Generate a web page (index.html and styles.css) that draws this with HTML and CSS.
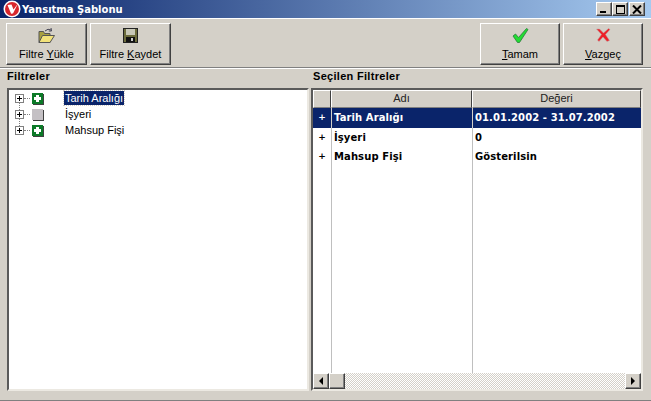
FILE: index.html
```html
<!DOCTYPE html>
<html lang="tr">
<head>
  <meta charset="UTF-8">
  <title>Yansıtma Şablonu</title>
  <link rel="stylesheet" href="styles.css">
</head>
<body>
  <div class="window">
    <div class="titlebar">
      <svg class="app-icon" width="18" height="18" viewBox="0 0 18 18">
        <circle cx="9" cy="9" r="8.5" fill="#fff"/>
        <circle cx="9" cy="9" r="7" fill="#d8262c"/>
        <path d="M4.5 5 L8 13.5 Q10 14.5 11 11.5 L15 3.5 L10.5 9.5 L8.5 4.5 Z" fill="#fff"/>
      </svg>
      <span class="title-text">Yansıtma Şablonu</span>
      <div class="win-btns">
        <button class="win-btn"><span class="min-mark"></span></button>
        <button class="win-btn"><span class="max-mark"></span></button>
        <button class="win-btn win-close">
          <svg width="10" height="9" viewBox="0 0 10 9"><path d="M1 0.5 L9 8.5 M9 0.5 L1 8.5" stroke="#000" stroke-width="2"/></svg>
        </button>
      </div>
    </div>

    <div class="toolbar">
      <button class="tool-btn">
        <svg width="17" height="15" viewBox="0 0 17 15">
          <path d="M1 3.5 L1 14.5 L12 14.5 L12 5.5 L6.5 5.5 L5.5 3.5 Z" fill="#a8a040" stroke="#555" stroke-width="1"/>
          <path d="M1 14.5 L4.5 7.5 L16.5 7.5 L12 14.5 Z" fill="#f2e27a" stroke="#555" stroke-width="1"/>
          <path d="M7 3 Q10 0 13 2 M13 0 L13.5 3 L10.8 3" fill="none" stroke="#445" stroke-width="1"/>
        </svg>
        <span>Filtre <u>Y</u>ükle</span>
      </button>
      <button class="tool-btn">
        <svg width="15" height="15" viewBox="0 0 15 15">
          <rect x="0.5" y="0.5" width="14" height="14" fill="#6b6b3c" stroke="#222"/>
          <rect x="3" y="1" width="9" height="6" fill="#c8c8b8"/>
          <rect x="3" y="9" width="9" height="5" fill="#111"/>
          <rect x="8" y="10" width="2" height="3" fill="#ccc"/>
        </svg>
        <span>Filtre <u>K</u>aydet</span>
      </button>
      <div class="toolbar-gap"></div>
      <button class="tool-btn tool-btn-small">
        <svg width="17" height="15" viewBox="0 0 17 15">
          <path d="M1 8 L3.5 6 L6.5 9.5 L14.5 0.5 L16 1.5 L7.5 14.5 L5.5 14.5 Z" fill="#22dd33" stroke="#2a7a3a" stroke-width="0.8"/>
        </svg>
        <span><u>T</u>amam</span>
      </button>
      <button class="tool-btn tool-btn-small">
        <svg width="15" height="15" viewBox="0 0 15 15">
          <path d="M0.5 1 L3.5 1 L7.5 5 L12.5 0.5 L14 1.5 L9.5 6.5 L13.5 12.5 L11 13.5 L7 9 L3 13.5 L1.5 12 L5.5 6.5 Z" fill="#ee2028" stroke="#b9a0a0" stroke-width="0.5"/>
        </svg>
        <span><u>V</u>azgeç</span>
      </button>
    </div>

    <div class="panels">
      <section class="panel panel-left">
        <h2>Filtreler</h2>
        <div class="sunken tree">
          <div class="tree-row">
            <span class="expander"></span><span class="dots"></span>
            <span class="state state-on"></span>
            <span class="tree-label tree-selected">Tarih Aralığı</span>
          </div>
          <div class="tree-row">
            <span class="expander"></span><span class="dots"></span>
            <span class="state state-off"></span>
            <span class="tree-label">İşyeri</span>
          </div>
          <div class="tree-row">
            <span class="expander"></span><span class="dots"></span>
            <span class="state state-on"></span>
            <span class="tree-label">Mahsup Fişi</span>
          </div>
        </div>
      </section>

      <section class="panel panel-right">
        <h2>Seçilen Filtreler</h2>
        <div class="sunken grid">
          <div class="grid-head">
            <div class="hcell hcell-mark"></div>
            <div class="hcell hcell-name">Adı</div>
            <div class="hcell hcell-value">Değeri</div>
          </div>
          <div class="grid-body">
            <div class="grid-row grid-row-active">
              <div class="cell cell-mark">+</div>
              <div class="cell cell-name">Tarih Aralığı</div>
              <div class="cell cell-value">01.01.2002 - 31.07.2002</div>
            </div>
            <div class="grid-row">
              <div class="cell cell-mark">+</div>
              <div class="cell cell-name">İşyeri</div>
              <div class="cell cell-value">0</div>
            </div>
            <div class="grid-row">
              <div class="cell cell-mark">+</div>
              <div class="cell cell-name">Mahsup Fişi</div>
              <div class="cell cell-value">Gösterilsin</div>
            </div>
            <div class="grid-fill">
              <div class="fill-mark"></div>
              <div class="fill-name"></div>
              <div class="fill-value"></div>
            </div>
          </div>
          <div class="hscroll">
            <button class="scroll-btn"><span class="arrow-left"></span></button>
            <button class="scroll-btn"></button>
            <div class="scroll-track"></div>
            <button class="scroll-btn"><span class="arrow-right"></span></button>
          </div>
        </div>
      </section>
    </div>
    <div class="bottom-strip"></div>
  </div>
</body>
</html>
```

FILE: styles.css
```css
* {
  box-sizing: border-box;
  margin: 0;
  padding: 0;
}
html, body {
  width: 651px;
  height: 401px;
  overflow: hidden;
}
body {
  font-family: 'Liberation Sans', Arial, sans-serif;
  font-size: 11px;
  color: #000;
  background-color: #d4d0c8;
}
.window {
  display: flex;
  flex-direction: column;
  height: 401px;
  border-bottom: 1px solid #808080;
}
button {
  font-family: inherit;
  font-size: inherit;
  color: #000;
  background-color: #d4d0c8;
  border: 1px solid;
  border-color: #fff #404040 #404040 #fff;
  box-shadow: inset -1px -1px 0 #808080;
}

/* title bar */
.titlebar {
  display: flex;
  align-items: center;
  height: 18px;
  flex: none;
  padding-left: 3px;
  background: linear-gradient(90deg, #0a246a, #a6caf0);
}
.app-icon {
  flex: none;
}
.title-text {
  margin-left: 1px;
  font-family: 'DejaVu Sans', Verdana, sans-serif;
  font-size: 10px;
  font-weight: bold;
  color: #fff;
}
.win-btns {
  display: flex;
  margin-left: auto;
  margin-right: 6px;
}
.win-btn {
  display: flex;
  align-items: center;
  justify-content: center;
  width: 16px;
  height: 14px;
}
.win-close {
  margin-left: 1px;
}
.min-mark {
  width: 6px;
  height: 2px;
  margin-top: 6px;
  margin-right: 2px;
  background-color: #000;
}
.max-mark {
  width: 9px;
  height: 9px;
  border: 1px solid #000;
  border-top-width: 2px;
}

/* toolbar */
.toolbar {
  display: flex;
  flex: none;
  height: 50px;
  padding: 4px 8px 3px 6px;
  gap: 3px;
  border-top: 1px solid #fff;
  border-bottom: 1px solid #808080;
  box-shadow: 0 1px 0 #fff;
}
.tool-btn {
  display: flex;
  flex-direction: column;
  align-items: center;
  gap: 5px;
  width: 81px;
  height: 42px;
  padding-top: 4px;
}
.tool-btn-small {
  width: 80px;
}
.toolbar-gap {
  flex: 1;
}

/* panels */
.panels {
  display: flex;
  flex: 1;
  min-height: 0;
  padding: 0 8px 0 7px;
  gap: 2px;
}
.panel {
  display: flex;
  flex-direction: column;
  min-width: 0;
}
.panel-left {
  width: 302px;
}
.panel-right {
  flex: 1;
}
h2 {
  height: 20px;
  padding-top: 2px;
  font-size: 11px;
  font-weight: bold;
  letter-spacing: .3px;
  line-height: 13px;
  white-space: nowrap;
}
.panel-right h2 {
  padding-left: 2px;
}
.sunken {
  flex: 1;
  min-height: 0;
  background-color: #fff;
  border: 2px solid;
  border-color: #5a5a5a #ece9e2 #ece9e2 #5a5a5a;
}
.bottom-strip {
  flex: none;
  height: 9px;
}

/* tree */
.tree {
  padding: 0 0 0 6px;
}
.tree-row {
  display: flex;
  align-items: center;
  height: 16px;
}
.expander {
  position: relative;
  flex: none;
  width: 9px;
  height: 9px;
  border: 1px solid #808080;
  background:
    linear-gradient(#000, #000) center / 5px 1px no-repeat,
    linear-gradient(#000, #000) center / 1px 5px no-repeat,
    #fff;
}
.tree-row + .tree-row .expander::before {
  content: "";
  position: absolute;
  left: 3px;
  top: -8px;
  height: 7px;
  border-left: 1px dotted #808080;
}
.dots {
  flex: none;
  width: 6px;
  margin-right: 2px;
  border-top: 1px dotted #808080;
}
.state {
  flex: none;
  width: 11px;
  height: 11px;
  box-shadow: 1px 1px 0 #404040;
}
.state-on {
  background:
    linear-gradient(#fff, #fff) center / 7px 3px no-repeat,
    linear-gradient(#fff, #fff) center / 3px 7px no-repeat,
    #0c7a28;
}
.state-off {
  background-color: #c4c0c4;
}
.tree-label {
  margin-left: 21px;
  padding: 0 1px;
  line-height: 14px;
  white-space: nowrap;
}
.tree-selected {
  color: #fff;
  background-color: #0a246a;
  outline: 1px dotted #d4d0c8;
}

/* grid */
.grid {
  display: flex;
  flex-direction: column;
}
.grid-head {
  display: flex;
  flex: none;
  height: 18px;
}
.hcell {
  height: 18px;
  text-align: center;
  line-height: 15px;
  color: #222;
  background-color: #d4d0c8;
  border: 1px solid;
  border-color: #fff #404040 #808080 #fff;
}
.hcell-mark,
.cell-mark,
.fill-mark {
  flex: none;
  width: 18px;
}
.hcell-name,
.cell-name,
.fill-name {
  flex: none;
  width: 141px;
}
.hcell-value,
.cell-value,
.fill-value {
  flex: 1;
  min-width: 0;
}
.grid-body {
  display: flex;
  flex: 1;
  flex-direction: column;
  min-height: 0;
}
.grid-row {
  display: flex;
  flex: none;
  height: 19.5px;
  font-family: 'DejaVu Sans', Verdana, sans-serif;
  font-size: 10px;
  font-weight: bold;
  letter-spacing: .1px;
  line-height: 19px;
}
.grid-row-active {
  color: #fff;
  background-color: #0a246a;
}
.cell {
  padding-left: 2px;
  white-space: nowrap;
  border-left: 1px solid #bfbfbf;
}
.cell-mark {
  padding-left: 0;
  font-size: 9px;
  text-align: center;
  border-left: 0;
}
.grid-row-active .cell {
  border-left-color: #d4d0c8;
}
.grid-fill {
  display: flex;
  flex: 1;
  min-height: 0;
}
.fill-name,
.fill-value {
  border-left: 1px solid #bfbfbf;
}
.hscroll {
  display: flex;
  flex: none;
  height: 16px;
}
.scroll-btn {
  display: flex;
  align-items: center;
  justify-content: center;
  flex: none;
  width: 16px;
  height: 16px;
}
.scroll-track {
  flex: 1;
  background-image: repeating-conic-gradient(#d4d0c8 0 25%, #fff 0 50%);
  background-size: 2px 2px;
}
.arrow-left {
  width: 0;
  height: 0;
  border: 4px solid transparent;
  border-left: 0;
  border-right-color: #000;
}
.arrow-right {
  width: 0;
  height: 0;
  border: 4px solid transparent;
  border-right: 0;
  border-left-color: #000;
}
```
